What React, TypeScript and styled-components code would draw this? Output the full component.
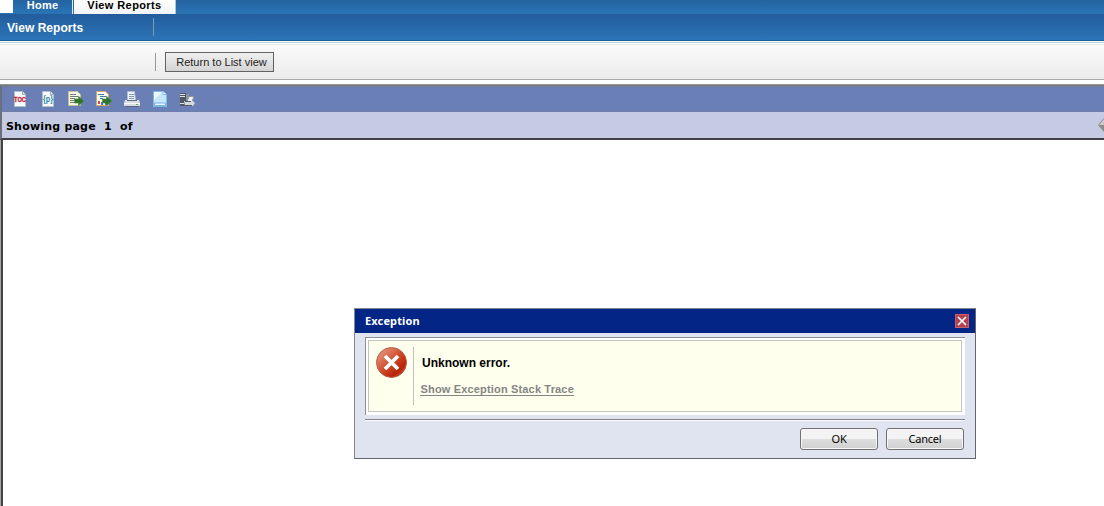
import React from 'react';
import styled, { createGlobalStyle } from 'styled-components';

const GlobalStyle = createGlobalStyle`
  *, *::before, *::after { box-sizing: border-box; }
  html, body { margin: 0; padding: 0; background: #fff; overflow: hidden; }
  body { font-family: "Liberation Sans", Arial, sans-serif; font-size: 12px; color: #000; }
`;

const Page = styled.div`
  position: relative;
  display: flex;
  flex-direction: column;
  width: 100%;
  height: 506px;
  overflow: hidden;
`;

const TabStrip = styled.nav`
  display: flex;
  height: 14px;
  padding-left: 13px;
  background: linear-gradient(#fff, #fff) 0 0 / 13px 13px no-repeat, linear-gradient(#2463a0, #2a75b6);
`;

const Tab = styled.a<{ $active?: boolean; $width: number; $spacing: number }>`
  display: flex;
  justify-content: center;
  width: ${p => p.$width}px;
  height: 14px;
  overflow: hidden;
  border-right: 1px solid ${p => (p.$active ? '#a9c4dc' : '#e4edf5')};
  margin-right: ${p => (p.$active ? 0 : 1)}px;
  color: ${p => (p.$active ? '#000' : '#fff')};
  background: ${p => (p.$active ? 'linear-gradient(#fff, #f1f3f5)' : 'transparent')};
  font-weight: bold;
  font-size: 11px;
  line-height: 10px;
  letter-spacing: ${p => p.$spacing}px;
`;

const TitleBar = styled.header`
  display: flex;
  align-items: center;
  height: 27px;
  background: linear-gradient(#225c9c, #2c75b8);
  border-bottom: 1px solid #205b92;
`;

const Title = styled.h1`
  width: 153px;
  margin: 0;
  padding: 2px 0 0 7px;
  color: #fff;
  font-size: 12px;
  line-height: 14px;
  letter-spacing: 0.04px;
`;

const Divider = styled.span<{ $color: string }>`
  width: 1px;
  height: 18px;
  background: ${p => p.$color};
`;

const ActionBar = styled.div`
  display: flex;
  align-items: center;
  height: 39px;
  padding-left: 155px;
  border-bottom: 1px solid #a9a9a9;
  background: linear-gradient(#fff 0 1px, #b8cde0 1px 2px, #fff 2px 3px, #e9e9e9 3px 4px, #fafafa 4px, #ebebeb);
`;

const ListButton = styled.button`
  width: 109px;
  height: 20px;
  margin: 3px 0 0 9px;
  padding: 0 0 0 4px;
  border: 1px solid #626262;
  background: linear-gradient(#f0f0f0, #d4d4d4);
  color: #222;
  font: 11px/16px "Liberation Sans", Arial, sans-serif;
  white-space: nowrap;
`;

const ActionDivider = styled(Divider)`
  margin-top: 3px;
`;

const Viewer = styled.main`
  display: flex;
  flex-direction: column;
  flex: 1;
  margin-top: 4px;
  border-top: 1px solid #969690;
`;

const Toolbar = styled.div`
  display: flex;
  align-items: center;
  gap: 12px;
  height: 27px;
  padding: 0 0 0 10px;
  border-left: 2px solid #68707f;
  border-top: 2px solid #747c8e;
  border-bottom: 1px solid #707da8;
  background: #6b7fb7;
`;

const ToolIcon = styled.svg`
  flex: none;
  width: 16px;
  height: 16px;
`;

const StatusBar = styled.div`
  display: flex;
  align-items: center;
  justify-content: space-between;
  height: 28px;
  padding: 3px 0 0 4px;
  border-left: 2px solid #68707f;
  border-bottom: 2px solid #3f3f46;
  background: #c4cbe3;
  font: bold 11px/14px "DejaVu Sans", Verdana, sans-serif;
`;

const PageStatus = styled.div`
  display: flex;
  white-space: pre;
`;

const StatusText = styled.span<{ $width: number }>`
  width: ${p => p.$width}px;
  letter-spacing: 0.2px;
`;

const PreviousIcon = styled.svg`
  width: 6px;
  height: 14px;
  margin-top: -4px;
`;

const Report = styled.div`
  flex: 1;
  border-left: 3px solid #4a4a4e;
  border-image: linear-gradient(90deg, #a5a5a5 0 1px, #444 1px) 0 0 0 3;
`;

const Dialog = styled.section`
  position: absolute;
  left: 354px;
  top: 308px;
  width: 622px;
  height: 151px;
  border: 1px solid #85858d;
  border-right-color: #64666d;
  border-bottom-color: #64666d;
  background: #e0e4f0;
`;

const DialogHeader = styled.header`
  display: flex;
  align-items: center;
  justify-content: space-between;
  height: 24px;
  padding: 0 6px 0 10px;
  background: #032585;
  color: #fff;
  font: bold 11px/14px "Noto Sans", Tahoma, sans-serif;
  letter-spacing: 0.14px;
`;

const CloseButton = styled.button`
  display: flex;
  width: 14px;
  height: 14px;
  padding: 0;
  border: 1px solid #c4606c;
  background: #b54050;
`;

const Frame = styled.div`
  height: 78px;
  margin: 4px 10px 0 10px;
  padding: 2px;
  border-top: 1px solid #8c8e99;
  border-left: 1px solid #8c8e99;
  background: #fff;
`;

const Message = styled.div`
  display: flex;
  height: 72px;
  margin-right: 1px;
  padding: 6px 0 0 7px;
  border: 1px solid #c4c4c0;
  background: #ffffee;
`;

const ErrorIcon = styled.svg`
  width: 32px;
  height: 32px;
`;

const MessageBody = styled.div`
  height: 58px;
  margin-left: 5px;
  padding: 9px 0 0 6px;
  border-left: 1px solid #c0c0c0;
`;

const MessageText = styled.p`
  margin: 0 0 13px 2px;
  font-weight: bold;
  font-size: 12px;
  line-height: 14px;
`;

const TraceLink = styled.a`
  display: block;
  width: 154px;
  padding-left: 0.6px;
  border-bottom: 1px solid #858585;
  color: #858585;
  font-weight: bold;
  font-size: 11px;
  line-height: 12px;
  letter-spacing: 0.16px;
  white-space: nowrap;
`;

const Footer = styled.footer`
  display: flex;
  justify-content: flex-end;
  gap: 8px;
  margin: 4px 10px 0 10px;
  padding: 8px 1px 0 0;
  border-top: 1px solid #7f818b;
  box-shadow: inset 0 1px #fff;
`;

const DialogButton = styled.button`
  width: 78px;
  height: 22px;
  padding: 0;
  border: 1px solid #707070;
  border-radius: 3px;
  background: linear-gradient(#f3f3f3 0 48%, #dedede 50%, #d0d0d0);
  box-shadow: inset 0 0 0 1px #f7f7f7;
  color: #000;
  font: 11px/18px "Noto Sans", Tahoma, sans-serif;
  letter-spacing: -0.2px;
`;

const Sheet = () => (
  <>
    <path d="M2.5.5h8l3 3v12h-11z" fill="#f8fafb" stroke="#afc1ce" />
    <path d="M10.5.5v3h3" fill="#d9e4e8" stroke="#a0afb5" />
  </>
);

const ExportArrow = () => (
  <path d="M6.5 8h4V5.2l5.3 4.8-5.3 4.8V12h-4z" fill="#2f742b" stroke="#4f8a3d" strokeWidth=".6" />
);

const icons: { name: string; art: React.ReactNode }[] = [
  {
    name: 'Table of contents',
    art: (
      <>
        <Sheet />
        <text x="8" y="11" textAnchor="middle" textLength="12" lengthAdjust="spacingAndGlyphs" fontFamily="Liberation Sans" fontWeight="bold" fontSize="7.5" fill="#c31d2e" stroke="#c31d2e" strokeWidth=".3">TOC</text>
      </>
    ),
  },
  {
    name: 'Parameters',
    art: (
      <>
        <Sheet />
        <text x="8" y="11" textAnchor="middle" textLength="10" lengthAdjust="spacingAndGlyphs" fontFamily="Liberation Sans" fontWeight="bold" fontSize="9" fill="#2384a5">{'{p}'}</text>
      </>
    ),
  },
  {
    name: 'Export data',
    art: (
      <>
        <path d="M.5.5h9l3 3v11H.5z" fill="#f7f5e8" stroke="#c3bd98" />
        <path d="M2 3.5h6M2 5.5h8M2 7.5h5M2 9.5h4M2 11.5h7" stroke="#777f72" />
        <ExportArrow />
      </>
    ),
  },
  {
    name: 'Export report',
    art: (
      <>
        <path d="M.5.5h9l3 3v11H.5z" fill="#fbfaf0" stroke="#dca764" />
        <path d="M2 3.5h6M4 5.5h6M4 7.5h3" stroke="#397aaa" />
        <path d="M2 10h2v3H2z" fill="#d14946" />
        <path d="M5 11h2v3H5z" fill="#3577ba" />
        <path d="M9 12h2v2H9z" fill="#3577ba" />
        <ExportArrow />
      </>
    ),
  },
  {
    name: 'Print',
    art: (
      <>
        <path d="M3.5.5h7l1 9h-8z" fill="#eef4fb" stroke="#b2bccd" />
        <path d="M5 3.5h5M5 5.5h5M5 7.5h5" stroke="#8594b0" />
        <path d="M1 9h14l1 3v3H0v-3z" fill="#d9dce0" />
        <path d="M3 9.5h10" stroke="#5b687d" />
        <path d="M0 12.5h16" stroke="#f8f8f8" />
        <path d="M1 15.5h14" stroke="#596277" />
        <path d="M12 13h2v1h-2z" fill="#68a55f" />
      </>
    ),
  },
  {
    name: 'Print preview',
    art: (
      <>
        <path d="M1.5.5h10l3 3v12h-13z" fill="#c5e7fc" stroke="#7eb8e6" />
        <path d="M2 1h8L2 9z" fill="#eaf8ff" />
        <path d="M11 .5v3h3.5" fill="#fff" stroke="#7eb8e6" />
        <path d="M2.5 12h11v2.5h-11z" fill="#eaf9ff" stroke="#78aee2" />
      </>
    ),
  },
  {
    name: 'Print on server',
    art: (
      <>
        <path d="M0 2h6v13H0z" fill="#505866" />
        <path d="M0 3.5h5M0 5.5h5M0 12.5h4" stroke="#dce1e4" />
        <path d="M6 3h3v6H6z" fill="#8b9299" />
        <path d="M9 5.5h5l-2 5H7z" fill="#eef1f3" stroke="#8c969f" />
        <path d="M4 10h9l2 2-2 3H5z" fill="#d5d8da" />
        <path d="M5 10.5h6M5 14.5h7" stroke="#535b64" />
      </>
    ),
  },
];

export default function App() {
  return (
    <Page>
      <GlobalStyle />
      <TabStrip>
        <Tab $width={60} $spacing={0.25}>Home</Tab>
        <Tab $active $width={102} $spacing={0.4}>View Reports</Tab>
      </TabStrip>
      <TitleBar>
        <Title>View Reports</Title>
        <Divider $color="#7d9bb8" />
      </TitleBar>
      <ActionBar>
        <ActionDivider $color="#999" />
        <ListButton>Return to List view</ListButton>
      </ActionBar>
      <Viewer>
        <Toolbar>
          {icons.map(icon => (
            <ToolIcon key={icon.name} viewBox="0 0 16 16" aria-label={icon.name}>{icon.art}</ToolIcon>
          ))}
        </Toolbar>
        <StatusBar>
          <PageStatus>
            <StatusText $width={98}>Showing page</StatusText>
            <StatusText $width={16}>1</StatusText>
            <StatusText $width={14}>of</StatusText>
          </PageStatus>
          <PreviousIcon viewBox="0 0 6 14">
            <path d="M6 0v14L0 7z" fill="#8b8b8b" />
            <path d="M6 1v6H1z" fill="#c9c9c9" />
          </PreviousIcon>
        </StatusBar>
        <Report />
      </Viewer>
      <Dialog role="dialog">
        <DialogHeader>
          Exception
          <CloseButton aria-label="Close">
            <svg width="12" height="12" viewBox="0 0 12 12">
              <path d="M2 2l8 8M10 2l-8 8" stroke="#fff" strokeWidth="1.7" />
            </svg>
          </CloseButton>
        </DialogHeader>
        <Frame>
          <Message>
            <ErrorIcon viewBox="0 0 32 32">
              <defs>
                <linearGradient id="errorFill" x1="0" y1="0" x2="1" y2="1">
                  <stop offset="0" stopColor="#eeaa96" />
                  <stop offset=".5" stopColor="#cf4b2b" />
                  <stop offset=".75" stopColor="#b92306" />
                  <stop offset="1" stopColor="#d56743" />
                </linearGradient>
              </defs>
              <circle cx="15.5" cy="15.5" r="15" fill="url(#errorFill)" stroke="#b35e4a" />
              <path d="M9 9l13 13M22 9L9 22" stroke="#fff" strokeWidth="3.8" />
            </ErrorIcon>
            <MessageBody>
              <MessageText>Unknown error.</MessageText>
              <TraceLink>Show Exception Stack Trace</TraceLink>
            </MessageBody>
          </Message>
        </Frame>
        <Footer>
          <DialogButton>OK</DialogButton>
          <DialogButton>Cancel</DialogButton>
        </Footer>
      </Dialog>
    </Page>
  );
}
